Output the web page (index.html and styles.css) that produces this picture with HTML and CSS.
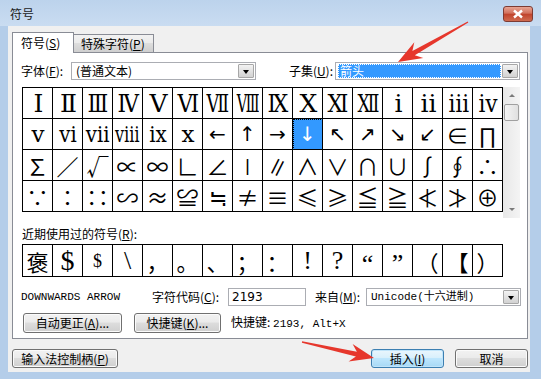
FILE: index.html
```html
<!DOCTYPE html>
<html>
<head>
	<meta charset="UTF-8">
	<title>符号</title>
	<link rel="stylesheet" href="styles.css">
</head>
<body>
	<div class="titlebar">
		<span class="title">符号</span>
		<div class="close-btn">
			<svg width="12" height="10" viewBox="0 0 12 10"><path d="M2 1.5 L10 8.5 M10 1.5 L2 8.5" stroke="#fff" stroke-width="2.4"/></svg>
		</div>
	</div>

	<div class="client">
		<div class="tabs">
			<div class="tab active">符号(<u>S</u>)</div>
			<div class="tab">特殊字符(<u>P</u>)</div>
		</div>

		<div class="panel">
			<div class="font-row">
				<label class="lbl font-lbl">字体(<u>F</u>):</label>
				<div class="combo font-combo">
					<span class="combo-text">(普通文本)</span>
					<span class="combo-btn"></span>
				</div>
				<label class="lbl subset-lbl">子集(<u>U</u>):</label>
				<div class="combo subset-combo">
					<span class="combo-text picked">箭头</span>
					<span class="combo-btn"></span>
				</div>
			</div>

			<div class="grid-wrap">
				<div class="grid">
					<div class="cell rn">Ⅰ</div><div class="cell rn">Ⅱ</div><div class="cell rn"><span class="sq1">Ⅲ</span></div><div class="cell rn"><span class="sq1">Ⅳ</span></div>
					<div class="cell rn">Ⅴ</div><div class="cell rn"><span class="sq1">Ⅵ</span></div><div class="cell rn"><span class="sq2">Ⅶ</span></div><div class="cell rn"><span class="sq3">Ⅷ</span></div>
					<div class="cell rn"><span class="sq1">Ⅸ</span></div><div class="cell rn">Ⅹ</div><div class="cell rn"><span class="sq1">Ⅺ</span></div><div class="cell rn"><span class="sq2">Ⅻ</span></div>
					<div class="cell rn">ⅰ</div><div class="cell rn">ⅱ</div><div class="cell rn"><span class="sq1">ⅲ</span></div><div class="cell rn"><span class="sq1">ⅳ</span></div>

					<div class="cell rs">ⅴ</div><div class="cell rs"><span class="sq1">ⅵ</span></div><div class="cell rs"><span class="sq1">ⅶ</span></div><div class="cell rs"><span class="sq2">ⅷ</span></div>
					<div class="cell rs"><span class="sq1">ⅸ</span></div><div class="cell rs">ⅹ</div><div class="cell arrow">←</div><div class="cell arrow">↑</div>
					<div class="cell arrow">→</div><div class="cell arrow sel">↓</div><div class="cell arrow">↖</div><div class="cell arrow">↗</div>
					<div class="cell arrow">↘</div><div class="cell arrow">↙</div><div class="cell m">∈</div><div class="cell m">∏</div>

					<div class="cell m">∑</div><div class="cell m">∕</div><div class="cell m">√</div><div class="cell m">∝</div>
					<div class="cell m">∞</div><div class="cell m">∟</div><div class="cell m">∠</div><div class="cell m">∣</div>
					<div class="cell m">∥</div><div class="cell m">∧</div><div class="cell m">∨</div><div class="cell m">∩</div>
					<div class="cell m">∪</div><div class="cell m">∫</div><div class="cell m">∮</div><div class="cell m">∴</div>

					<div class="cell m">∵</div><div class="cell m">∶</div><div class="cell m">∷</div><div class="cell m">∽</div>
					<div class="cell m">≈</div><div class="cell m">≌</div><div class="cell m">≒</div><div class="cell m">≠</div>
					<div class="cell m">≡</div><div class="cell m">≤</div><div class="cell m">≥</div><div class="cell m">≦</div>
					<div class="cell m">≧</div><div class="cell m">≮</div><div class="cell m">≯</div><div class="cell m">⊕</div>
				</div>
				<div class="scrollbar">
					<div class="sb-btn"><span class="tri up"></span></div>
					<div class="sb-track"><div class="sb-thumb"></div></div>
					<div class="sb-btn"><span class="tri down"></span></div>
				</div>
			</div>

			<div class="lbl recent-lbl">近期使用过的符号(<u>R</u>):</div>
			<div class="recent">
				<div class="cell cjk">褒</div><div class="cell big">$</div><div class="cell small">$</div><div class="cell">\</div>
				<div class="cell cjk low">，</div><div class="cell cjk low">。</div><div class="cell cjk low">、</div><div class="cell cjk">；</div>
				<div class="cell cjk">：</div><div class="cell">!</div><div class="cell">?</div><div class="cell high">“</div>
				<div class="cell high">”</div><div class="cell cjk">（</div><div class="cell cjk">【</div><div class="cell cjk">）</div>
			</div>

			<div class="info-row">
				<span class="mono char-name">DOWNWARDS ARROW</span>
				<label class="lbl code-lbl">字符代码(<u>C</u>):</label>
				<div class="field">2193</div>
				<label class="lbl from-lbl">来自(<u>M</u>):</label>
				<div class="combo from-combo">
					<span class="combo-text mono">Unicode(十六进制)</span>
					<span class="combo-btn"></span>
				</div>
			</div>

			<div class="btn-row">
				<button class="btn autocorrect">自动更正(<u>A</u>)...</button>
				<button class="btn shortcut">快捷键(<u>K</u>)...</button>
				<span class="lbl shortcut-text">快捷键: <span class="mono">2193, Alt+X</span></span>
			</div>
		</div>

		<div class="footer">
			<button class="btn ime">输入法控制柄(<u>P</u>)</button>
			<button class="btn default insert">插入(<u>I</u>)</button>
			<button class="btn cancel">取消</button>
		</div>
	</div>

	<!-- red annotation arrows drawn over the screenshot -->
	<svg class="marks" width="541" height="379" viewBox="0 0 541 379">
		<polygon points="467.7,21.4 412.4,50.9 414.3,42.3 398,62 423.3,57.9 414.8,55.3 468.3,22.6" fill="#e6372c"/>
		<polygon points="302.1,341.3 356.9,351.7 352.6,344 374,358 348.6,361.6 355.9,356.5 301.9,342.7" fill="#e6372c"/>
	</svg>
</body>
</html>
```

FILE: styles.css
```css
* {
	box-sizing: border-box;
}

body {
	margin: 0;
	width: 541px;
	height: 379px;
	overflow: hidden;
	position: relative;
	background: #b4cde9;
	font: 12px/16px "Noto Sans CJK SC", sans-serif;
	color: #000;
}

u {
	text-decoration: underline;
	text-underline-offset: 1px;
}

.mono {
	font-family: "Liberation Mono", "Noto Sans CJK SC", monospace;
	font-size: 11px;
}

/* window frame */
.titlebar {
	height: 26px;
	display: flex;
	align-items: flex-start;
	padding-left: 10px;
	background: linear-gradient(#bcd3ec, #c9dcf1);
}
.title {
	margin-top: 6px;
	font-size: 12px;
	color: #1a1a1a;
}
.close-btn {
	margin: 6px 8px 0 auto;
	width: 30px;
	height: 16px;
	border: 1px solid #7d3b33;
	border-radius: 3px;
	background: linear-gradient(#e8a493, #d1705c 45%, #c0422b 50%, #cf6b50);
	display: flex;
	align-items: center;
	justify-content: center;
}

.client {
	margin-left: 8px;
	width: 522px;
	height: 346px;
	background: #f0f0f0;
	padding: 0 2px 0 4px;
}

/* tabs */
.tabs {
	height: 26px;
	display: flex;
	align-items: flex-end;
}
.tab {
	height: 18px;
	border: 1px solid #898c95;
	border-bottom: none;
	padding: 0 7px;
	line-height: 17px;
	background: linear-gradient(#f2f2f2, #ebebeb 45%, #dddddd 50%, #cfcfcf);
}
.tab.active {
	height: 21px;
	width: 62px;
	margin-bottom: -1px;
	padding-left: 8px;
	line-height: 19px;
	background: #fff;
	position: relative;
	z-index: 1;
}
.tab + .tab {
	margin-left: -1px;
	width: 81px;
}

.panel {
	width: 516px;
	height: 287px;
	border: 1px solid #898c95;
	background: #fff;
	padding: 9px 5px 0 9px;
}

/* combo boxes */
.font-row {
	height: 18px;
	display: flex;
}
.lbl {
	line-height: 18px;
	white-space: nowrap;
}
.font-lbl {
	width: 50px;
	margin-left: -1px;
}
.subset-lbl {
	width: 79px;
	text-align: right;
	padding-right: 2px;
}
.combo {
	height: 18px;
	border: 1px solid #abadb3;
	background: #fff;
	display: flex;
	padding: 1px 1px 1px 2px;
}
.font-combo,
.subset-combo {
	width: 185px;
}
.combo-text {
	flex: 1;
	line-height: 14px;
	padding-left: 2px;
}
.combo-text.picked {
	background: #3399ff;
	color: #fff;
	outline: 1px dotted #fff;
	outline-offset: -1px;
	margin-right: 1px;
}
.combo-btn {
	width: 16px;
	border: 1px solid #a7a7a7;
	border-radius: 1px;
	background: linear-gradient(#f3f3f3, #e2e2e2 50%, #d2d2d2);
	position: relative;
}
.combo-btn::after {
	content: "";
	position: absolute;
	left: 4px;
	top: 5px;
	border: 3.5px solid transparent;
	border-top: 4px solid #000;
}

/* symbol grid */
.grid-wrap {
	margin-top: 7px;
	height: 131px;
	display: flex;
}
.grid,
.recent {
	width: 481px;
	display: grid;
	grid-template-columns: repeat(16, 30px);
	border-left: 1px solid #000;
	border-top: 1px solid #000;
	align-self: flex-start;
}
.grid {
	grid-auto-rows: 31px;
}
.cell {
	border-right: 1px solid #000;
	border-bottom: 1px solid #000;
	display: flex;
	align-items: center;
	justify-content: center;
	font: 22px/1 "Liberation Serif", "DejaVu Serif", "Noto Sans CJK SC", serif;
	overflow: hidden;
	white-space: nowrap;
}
.cell.rn {
	font: 25px/1 "DejaVu Serif", serif;
	letter-spacing: -2px;
}
.cell.rs {
	font: 23px/1 "DejaVu Serif", serif;
	letter-spacing: -1px;
}
.sq1,
.sq2,
.sq3 {
	display: inline-block;
}
.sq1 {
	transform: scaleX(.86);
}
.sq2 {
	transform: scaleX(.7);
}
.sq3 {
	transform: scaleX(.58);
}
.cell.arrow {
	font: 20px/1 "DejaVu Sans", sans-serif;
}
.cell.m {
	font: 22px/1 "Noto Sans CJK SC", sans-serif;
}
.cell.sel {
	background: #3399ff;
	color: #fff;
	outline: 1px dotted #000;
	outline-offset: -1px;
}

.scrollbar {
	width: 17px;
	display: flex;
	flex-direction: column;
	background: linear-gradient(to right, #e8e8e8, #f4f4f4);
}
.sb-btn {
	height: 17px;
	display: flex;
	align-items: center;
	justify-content: center;
}
.sb-track {
	flex: 1;
}
.sb-thumb {
	height: 17px;
	margin: 0 1px;
	border: 1px solid #a0a0a0;
	border-radius: 2px;
	background: linear-gradient(to right, #f4f4f4, #e0e0e0);
}
.tri {
	border: 3px solid transparent;
}
.tri.up {
	border-bottom: 3px solid #7a7a7a;
	margin-top: -3px;
}
.tri.down {
	border-top: 3px solid #7a7a7a;
	margin-bottom: -3px;
}

.recent-lbl {
	margin-top: 8px;
	line-height: 16px;
}
.recent {
	margin-top: 2px;
	grid-auto-rows: 32px;
}
.recent .cell {
	font-size: 26px;
}
.recent .cell.cjk {
	font: 22px/1 "Noto Sans CJK SC", sans-serif;
}
.recent .cell.big {
	font-size: 28px;
}
.recent .cell.small {
	font-size: 18px;
}
.recent .cell.low {
	align-items: flex-end;
	padding-bottom: 4px;
}
.recent .cell.high {
	align-items: flex-start;
	padding-top: 6px;
}

/* info and buttons */
.info-row {
	margin-top: 11px;
	height: 18px;
	display: flex;
}
.char-name {
	width: 131px;
	line-height: 18px;
	margin-left: -1px;
}
.code-lbl {
	width: 76px;
}
.field {
	width: 78px;
	height: 18px;
	border: 1px solid #abadb3;
	padding-left: 3px;
	font: 12px/16px "DejaVu Sans", sans-serif;
}
.from-lbl {
	width: 51px;
	margin-left: 9px;
}
.from-combo {
	width: 155px;
}
.from-combo .combo-text {
	font-size: 11px;
}

.btn-row {
	margin-top: 7px;
	height: 20px;
	display: flex;
	align-items: center;
	padding-left: 1px;
}
.btn {
	height: 20px;
	padding: 0;
	border: 1px solid #707070;
	border-radius: 3px;
	background: linear-gradient(#f2f2f2, #ebebeb 45%, #dddddd 50%, #cfcfcf);
	box-shadow: inset 0 0 0 1px #fbfbfb;
	font: 12px/16px "Noto Sans CJK SC", sans-serif;
	color: #000;
}
.autocorrect {
	width: 99px;
}
.shortcut {
	width: 87px;
	margin-left: 12px;
}
.shortcut-text {
	margin-left: 10px;
}

.footer {
	margin-top: 10px;
	display: flex;
}
.footer .btn {
	height: 19px;
}
.ime {
	width: 106px;
}
.insert {
	width: 73px;
	margin-left: auto;
}
.btn.default {
	border-color: #3c7fb1;
	background: linear-gradient(#eaf6fd, #d9f0fc 45%, #bee6fd 50%, #a7d9f5);
	box-shadow: inset 0 0 0 1px #c0e4fa;
}
.cancel {
	width: 73px;
	margin-left: 11px;
}

.marks {
	position: absolute;
	left: 0;
	top: 0;
	pointer-events: none;
}
```
